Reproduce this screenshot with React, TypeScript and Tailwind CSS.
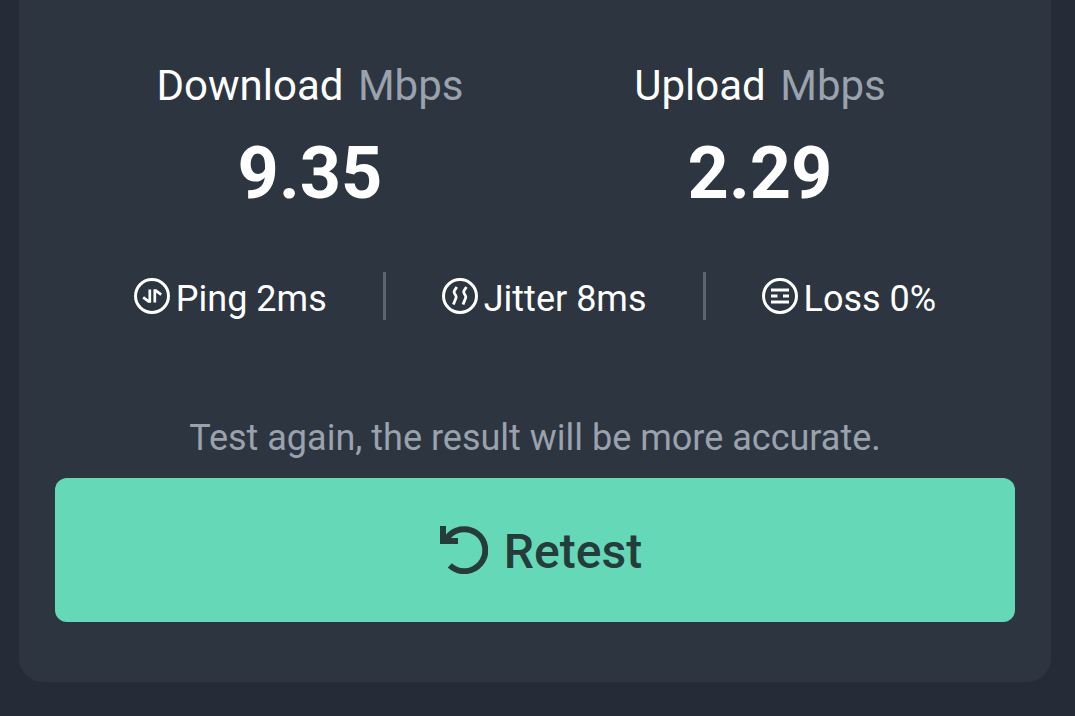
import type { ReactNode } from 'react'

interface Speed {
  label: string
  value: string
}

interface Stat {
  label: string
  value: string
  icon: ReactNode
}

const PingIcon = () => (
  <svg viewBox="0 0 36 36" className="size-9 shrink-0" fill="none" stroke="currentColor" aria-hidden="true">
    <circle cx="18" cy="18" r="16.5" strokeWidth="3" />
    <path d="M15.8 11.5v13.3M9.2 19.4l6 4.4" strokeWidth="2.7" />
    <path d="M20.8 24.5V11.2M21.2 12.2l6 4.4" strokeWidth="2.7" />
  </svg>
)

const JitterIcon = () => (
  <svg viewBox="0 0 36 36" className="size-9 shrink-0" fill="none" stroke="currentColor" aria-hidden="true">
    <circle cx="18" cy="18" r="16.5" strokeWidth="3" />
    <path d="M14.8 9l-2.4 3.8c-.6 1-.5 1.6.1 2.6l1.3 2.2c.6 1 .6 1.7.1 2.7L11.4 26.6" strokeWidth="2.8" />
    <path d="M24.4 9L22 12.8c-.6 1-.5 1.6.1 2.6l1.3 2.2c.6 1 .6 1.7.1 2.7L21 26.6" strokeWidth="2.8" />
  </svg>
)

const LossIcon = () => (
  <svg viewBox="0 0 36 36" className="size-9 shrink-0" fill="none" stroke="currentColor" aria-hidden="true">
    <circle cx="18" cy="18" r="16.5" strokeWidth="3" />
    <path d="M9 12h18M9 18h6.5M21 18h6M9 24h18" strokeWidth="3" />
  </svg>
)

const RetestIcon = () => (
  <svg viewBox="0 0 48 48" className="size-12 shrink-0" fill="none" stroke="currentColor" strokeWidth="6" aria-hidden="true">
    <path d="M6.5 13A21 21 0 1 1 9.8 39.4" />
    <path d="M3 0v15h15" />
  </svg>
)

const SPEEDS: Speed[] = [
  { label: 'Download', value: '9.35' },
  { label: 'Upload', value: '2.29' },
]

const STATS: Stat[] = [
  { label: 'Ping', value: '2ms', icon: <PingIcon /> },
  { label: 'Jitter', value: '8ms', icon: <JitterIcon /> },
  { label: 'Loss', value: '0%', icon: <LossIcon /> },
]

export default function App() {
  return (
    <div className="min-h-screen bg-[#252c38] pl-[19px] pr-6 pb-8 font-['Roboto',sans-serif] text-white">
      <main className="rounded-b-3xl bg-[#2d3540] px-9 pt-[62px] pb-[60px]">
        {/* Speeds */}
        <div className="grid grid-cols-2 px-[30px]">
          {SPEEDS.map(speed => (
            <section key={speed.label} className="flex flex-col items-center gap-6">
              <h2 className="text-[42px] leading-[48px]">
                {speed.label} <span className="ml-1 text-[#9aa2ae]">Mbps</span>
              </h2>
              <p className="text-7xl leading-20 font-bold">{speed.value}</p>
            </section>
          ))}
        </div>

        {/* Connection quality */}
        <ul className="mt-[58px] flex justify-center divide-x-3 divide-[#5d6470]">
          {STATS.map(stat => (
            <li key={stat.label} className="flex h-12 items-center gap-1.5 px-14 text-4xl whitespace-nowrap">
              {stat.icon}
              <span className="pt-1.5">{stat.label} {stat.value}</span>
            </li>
          ))}
        </ul>

        <p className="mt-[98px] text-center text-4xl leading-10 text-[#9aa2ae]">
          Test again, the result will be more accurate.
        </p>
        <button
          type="button"
          className="mt-5 flex h-36 w-full items-center justify-center gap-4 rounded-xl bg-[#65d9b7] pl-3 text-5xl font-medium text-[#263c3a]"
        >
          <RetestIcon />
          <span className="pt-1">Retest</span>
        </button>
      </main>
    </div>
  )
}
